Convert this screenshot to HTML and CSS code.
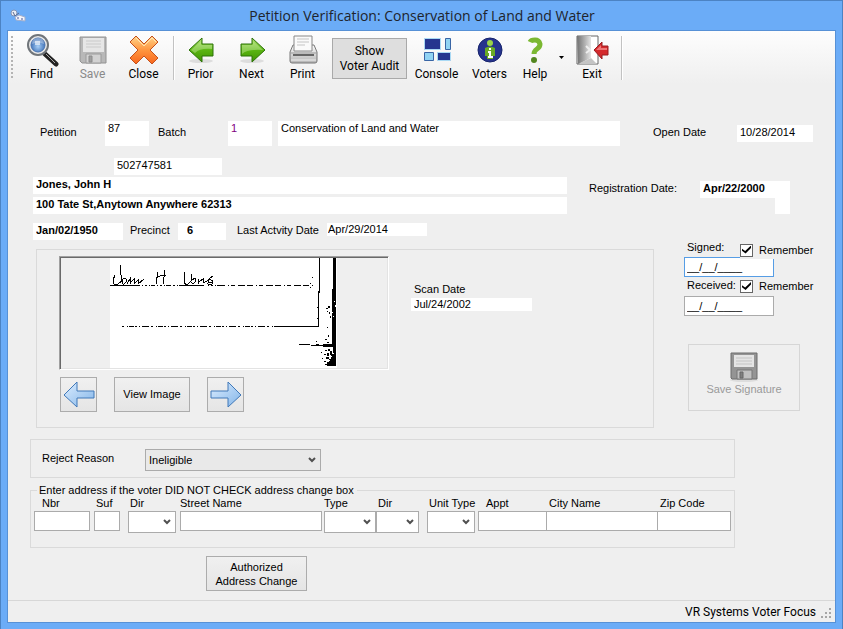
FILE: index.html
```html
<!DOCTYPE html>
<html lang="en">
  <head>
    <meta charset="UTF-8" />
    <meta name="viewport" content="width=device-width, initial-scale=1.0" />
    <title>Petition Verification: Conservation of Land and Water</title>
    <link rel="stylesheet" href="styles.css">
  </head>
  <body>
    <div class="window">
      <header class="titlebar">
        <svg class="app-icon" width="16" height="14" viewBox="0 0 16 14">
          <circle cx="4" cy="4" r="3" fill="#e8edf5" stroke="#8595b5" />
          <path d="M3 3l2 4 4-3" fill="none" stroke="#5d6b92" />
          <path d="M5 8l4-2 6 2v4l-9-1z" fill="#f2f4fa" stroke="#a4afcb" />
          <path d="M7 9h2M11 10h2" stroke="#4a5598" stroke-width="1" />
        </svg>
        <h1>Petition Verification: Conservation of Land and Water</h1>
      </header>

      <main class="client">
        <nav class="toolbar">
          <span class="grip"></span>
          <button type="button" class="tool">
            <svg width="34" height="34" viewBox="0 0 34 34">
              <defs>
                <radialGradient id="lens" cx="50%" cy="60%" r="60%">
                  <stop offset="0" stop-color="#a9d0f7" />
                  <stop offset="1" stop-color="#2d62ae" />
                </radialGradient>
              </defs>
              <path d="M20 21l11 10" stroke="#222" stroke-width="5" stroke-linecap="round" />
              <path d="M21 21l9 9" stroke="#aaa" stroke-width="1" />
              <circle cx="13" cy="12" r="10" fill="#e8e8e8" stroke="#70757a" stroke-width="2" />
              <circle cx="13" cy="12" r="7" fill="url(#lens)" stroke="#4a74b0" />
              <path d="M7 11q0-6 6-6t6 6q-6-3-12 0z" fill="#fff" opacity=".35" />
              <path d="M10 8h5v4h-5z" fill="#fff" opacity=".6" />
            </svg>
            Find
          </button>
          <button type="button" class="tool" disabled>
            <svg width="34" height="34" viewBox="0 0 34 34">
              <path d="M4 4h26v26H6l-2-2z" fill="#b8b8b8" stroke="#929292" />
              <path d="M7 5h21v14H7z" fill="#e6e6e6" />
              <path d="M10 8h15M10 11h15M10 14h15" stroke="#cacaca" />
              <path d="M10 21h15v9H10z" fill="#d2d2d2" stroke="#9a9a9a" />
              <path d="M13 23h3v6h-3z" fill="#a0a0a0" stroke="#8c8c8c" />
            </svg>
            Save
          </button>
          <button type="button" class="tool">
            <svg width="34" height="34" viewBox="0 0 34 34">
              <defs>
                <linearGradient id="orange" x2="0" y2="1">
                  <stop offset="0" stop-color="#ffd58c" />
                  <stop offset=".5" stop-color="#ff9640" />
                  <stop offset="1" stop-color="#f8661d" />
                </linearGradient>
              </defs>
              <path d="M9 3l8 8 8-8 6 6-8 8 8 8-6 6-8-8-8 8-6-6 8-8-8-8z" fill="url(#orange)" stroke="#c4501c" stroke-linejoin="round" />
              <path d="M9 5l8 8 8-8 4 4" fill="none" stroke="#fff1c4" opacity=".8" />
            </svg>
            Close
          </button>
          <span class="separator"></span>
          <button type="button" class="tool">
            <svg width="34" height="34" viewBox="0 0 34 34">
              <defs>
                <linearGradient id="green" x2="0" y2="1">
                  <stop offset="0" stop-color="#b0e070" />
                  <stop offset=".5" stop-color="#5bb512" />
                  <stop offset="1" stop-color="#409400" />
                </linearGradient>
              </defs>
              <ellipse cx="17" cy="28" rx="12" ry="2" fill="#ddd" />
              <path d="M5 17L18 5v6h11v12H18v6z" fill="url(#green)" stroke="#2c7308" />
              <path d="M7 17L17 8v4h11v4q-12-1-17 4z" fill="#d8f3b4" opacity=".4" />
            </svg>
            Prior
          </button>
          <button type="button" class="tool">
            <svg width="34" height="34" viewBox="0 0 34 34">
              <ellipse cx="17" cy="28" rx="12" ry="2" fill="#ddd" />
              <path d="M30 17L17 5v6H6v12h11v6z" fill="url(#green)" stroke="#2c7308" />
              <path d="M28 17L18 8v4H7v9q5-5 21-4z" fill="#d8f3b4" opacity=".4" />
            </svg>
            Next
          </button>
          <button type="button" class="tool">
            <svg width="34" height="34" viewBox="0 0 34 34">
              <defs>
                <linearGradient id="silver" x2="0" y2="1">
                  <stop offset="0" stop-color="#fcfcfc" />
                  <stop offset="1" stop-color="#b4b4b4" />
                </linearGradient>
              </defs>
              <path d="M7 12L4 19v9q0 2 2 2h23q2 0 2-2v-9l-3-7z" fill="url(#silver)" stroke="#777" />
              <path d="M8 3h18v15H8z" fill="#fafafa" stroke="#888" />
              <path d="M11 6h12M11 9h12M11 12h8" stroke="#c4c4c4" />
              <path d="M4 20h27" stroke="#999" />
              <path d="M7 22h21" stroke="#666" stroke-width="2" />
              <path d="M5 27h25" stroke="#d8d8d8" stroke-width="2" />
            </svg>
            Print
          </button>
          <button type="button" class="audit">Show<br />Voter Audit</button>
          <button type="button" class="tool wide">
            <svg width="34" height="34" viewBox="0 0 34 34">
              <path d="M4.500 5.500h16v11h-16zM17.500 19.500h13v8h-13z" fill="#25368f" stroke="#a9d9f4" />
              <path d="M25.500 5.500h5v11h-5zM4.500 19.500h9v8h-9z" fill="#91d3f3" stroke="#3965a5" />
            </svg>
            Console
          </button>
          <button type="button" class="tool">
            <svg width="34" height="34" viewBox="0 0 34 34">
              <circle cx="17" cy="17" r="12" fill="#26338d" stroke="#17246c" />
              <circle cx="17" cy="10" r="3" fill="#9bd447" />
              <path d="M12 15q5-3 10 0v8h-2v3h-6v-3h-2z" fill="#69ab26" />
              <path d="M17 15v2M15 19h2v5M15 24h5" stroke="#fff" stroke-width="2" fill="none" />
            </svg>
            Voters
          </button>
          <button type="button" class="tool narrow">
            <svg width="34" height="34" viewBox="0 0 34 34">
              <path d="M12 9q1-2 5-2t5 4q0 3-3 5t-3 5" fill="none" stroke="#7bb832" stroke-width="5" />
              <circle cx="16" cy="27" r="3" fill="#528620" />
            </svg>
            Help
          </button>
          <button type="button" class="drop" aria-label="More help"></button>
          <button type="button" class="tool narrow">
            <svg width="34" height="34" viewBox="0 0 34 34">
              <defs>
                <linearGradient id="door">
                  <stop offset="0" stop-color="#707070" />
                  <stop offset="1" stop-color="#e4e4e4" />
                </linearGradient>
              </defs>
              <path d="M2 3h21v28H2z" fill="#fff" stroke="#666" />
              <path d="M3 31l13-6 6 6z" fill="#c4c4c4" />
              <path d="M2 3h14v22L3 31z" fill="url(#door)" />
              <path d="M11 13l4 4-4 3" fill="none" stroke="#eee" stroke-width="2" />
              <path d="M19 17l8-8v4h6v9h-6v4z" fill="#d42a2d" stroke="#981c20" />
              <path d="M21 17l5-5v3h6v2z" fill="#ee7777" />
            </svg>
            Exit
          </button>
          <span class="separator"></span>
        </nav>

        <form class="form">
          <div class="row petition">
            <label class="petition-label" for="petition">Petition</label>
            <input class="plain tall small" id="petition" value="87" readonly />
            <label class="batch-label" for="batch">Batch</label>
            <input class="plain tall small batch" id="batch" value="1" readonly />
            <input class="plain tall grow" aria-label="Petition name" value="Conservation of Land and Water" readonly />
            <label class="open-label" for="openDate">Open Date</label>
            <input class="plain open-date" id="openDate" value="10/28/2014" readonly />
          </div>

          <div class="row">
            <input class="plain voter-id" aria-label="Voter ID" value="502747581" readonly />
          </div>

          <div class="row voter">
            <div class="voter-lines">
              <input class="plain strong" aria-label="Voter name" value="Jones, John H" readonly />
              <input class="plain strong" aria-label="Voter address" value="100 Tate St,Anytown Anywhere 62313" readonly />
            </div>
            <label class="reg-label" for="regDate">Registration Date:</label>
            <div class="reg">
              <input class="plain strong" id="regDate" value="Apr/22/2000" readonly />
              <span class="reg-edge"></span>
            </div>
          </div>

          <div class="middle">
            <div class="left">
              <div class="row details">
                <input class="plain strong birth" aria-label="Birth date" value="Jan/02/1950" readonly />
                <label class="precinct-label" for="precinct">Precinct</label>
                <input class="plain strong precinct" id="precinct" value="6" readonly />
                <label class="activity-label" for="activity">Last Actvity Date</label>
                <input class="plain short activity" id="activity" value="Apr/29/2014" readonly />
              </div>

              <section class="panel signature-panel">
                <div>
                  <div class="viewer">
                    <svg width="227" height="110" viewBox="0 0 227 110" shape-rendering="crispEdges" role="img" aria-label="Scanned signature">
                      <path fill="#fff" d="M0 0h227v110H0z" />
                      <g fill="none" stroke="#000">
                        <path d="M5 17l-2 5 1 4 3 1 4-4 3-3M10 7v4l1 6 1 5 1 4M10 25l4-5 2 1v3l-3 3M17 26l3-5 0 5M20 25l4-4 0 5 4-4 0 4 6-5M48 14l-1 6-1 6M55 12l-1 7-1 7M46 20l4-2 6-1M75 14l-1 6v5l3 2 4-4 1-7M82 22l3-2 1 3-3 3-2-2M88 26l1-5M89 24l4-3 0 4 4-2 2-2-1 4 4-1M103 18l-4 3 4 2-1 3h-4" />
                        <path d="M0 27.500h30M72 27.500h22" />
                        <path d="M32 27.500h28M60 27.500h14M98 27.500h14" stroke-dasharray="1 2 2 2 1 1 4 2" />
                        <path d="M109 27.500h96" stroke-dasharray="6 3 1 2 4 3 7 2" />
                        <path d="M12 68.500h160" stroke-dasharray="2 3 1 1 5 1 2 2 1 2 7 2" />
                        <path d="M166 68.500h43M209.500 0v35M208.500 33v36" />
                        <path d="M189 86.500h11M201 87.500h25M206 86.500h3M213 86.500h10M213 88.500h11" />
                      </g>
                      <path d="M223 0h3v108h-9v-4h2v-3h2v-5h2v-8h-1V31h1z" />
                      <path d="M202 19h1v1h-1zM200 25h1v1h-1zM200 29h1v1h-1zM207 49h1v1h-1zM207 60h1v1h-1zM216 50h2v1h-2zM218 48h2v2h-2zM217 53h1v1h-1zM219 54h1v2h-1zM220 58h1v2h-1zM217 69h1v1h-1zM218 77h1v2h-1zM215 81h2v1h-2zM206 83h1v1h-1zM217 84h2v1h-2zM215 92h2v1h-2zM218 91h2v2h-2zM211 94h1v1h-1zM214 96h2v1h-2zM217 95h2v3h-2zM220 93h2v4h-2zM212 100h1v1h-1zM216 99h3v2h-3zM214 103h2v1h-2zM215 106h2v1h-2z" />
                      <path fill="#fff" d="M224 43h1v1h-1zM225 47h1v2h-1zM222 54h1v1h-1zM223 58h1v1h-1zM221 98h1v1h-1zM223 95h1v1h-1zM219 102h1v1h-1z" />
                    </svg>
                  </div>
                  <div class="viewer-actions">
                    <button type="button" class="arrow" aria-label="Previous image">
                      <svg width="32" height="30" viewBox="0 0 32 30">
                        <defs>
                          <linearGradient id="blue" x2="1" y2="1">
                            <stop offset="0" stop-color="#dcedff" />
                            <stop offset="1" stop-color="#83b5e8" />
                          </linearGradient>
                        </defs>
                        <path d="M1 15L14 2v9h17v7H14v9z" fill="url(#blue)" stroke="#4078b8" />
                      </svg>
                    </button>
                    <button type="button" class="view">View Image</button>
                    <button type="button" class="arrow" aria-label="Next image">
                      <svg width="32" height="30" viewBox="0 0 32 30">
                        <path d="M31 15L18 2v9H1v7h17v9z" fill="url(#blue)" stroke="#4078b8" />
                      </svg>
                    </button>
                  </div>
                </div>
                <div class="scan">
                  <label for="scanDate">Scan Date</label>
                  <input class="plain short" id="scanDate" value="Jul/24/2002" readonly />
                </div>
              </section>
            </div>

            <div class="right">
              <div class="date-head signed-head">
                <label for="signed">Signed:</label>
                <label class="remember"><input type="checkbox" checked /> Remember</label>
              </div>
              <input class="date focused" id="signed" value="__/__/____" />
              <div class="date-head">
                <label for="received">Received:</label>
                <label class="remember"><input type="checkbox" checked /> Remember</label>
              </div>
              <input class="date" id="received" value="__/__/____" />
              <button type="button" class="save-signature" disabled>
                <svg width="30" height="30" viewBox="0 0 30 30">
                  <ellipse cx="15" cy="28" rx="14" ry="2" fill="#ddd" />
                  <path d="M2 1h26v26H3l-1-1z" fill="#949494" stroke="#6c6c6c" />
                  <path d="M5 3h20v12H5z" fill="#e4e4e4" />
                  <path d="M7 6h16M7 9h16M7 12h16" stroke="#c4c4c4" />
                  <path d="M8 18h15v9H8z" fill="#c0c0c0" stroke="#777" />
                  <path d="M11 20h3v6h-3z" fill="#808080" stroke="#666" />
                </svg>
                Save Signature
              </button>
            </div>
          </div>

          <section class="panel reject">
            <label for="reason">Reject Reason</label>
            <select id="reason">
              <option>Ineligible</option>
            </select>
          </section>

          <fieldset class="panel address">
            <legend>Enter address if the voter DID NOT CHECK address change box</legend>
            <div class="address-grid">
              <label class="in" for="nbr">Nbr</label>
              <label for="suf">Suf</label>
              <label for="dir">Dir</label>
              <label class="out" for="street">Street Name</label>
              <label class="out" for="type">Type</label>
              <label for="postDir">Dir</label>
              <label for="unitType">Unit Type</label>
              <label class="in" for="appt">Appt</label>
              <label for="city">City Name</label>
              <label for="zip">Zip Code</label>
              <input id="nbr" />
              <input class="suf" id="suf" />
              <select class="dir" id="dir"><option></option></select>
              <input class="street" id="street" />
              <select id="type"><option></option></select>
              <select class="post" id="postDir"><option></option></select>
              <select class="unit" id="unitType"><option></option></select>
              <input class="appt" id="appt" />
              <input class="joined" id="city" />
              <input class="joined" id="zip" />
            </div>
          </fieldset>

          <button type="button" class="authorized">Authorized<br />Address Change</button>
        </form>

        <footer class="statusbar">
          <span>VR Systems Voter Focus</span>
          <svg width="11" height="11" viewBox="0 0 11 11" fill="#a6a6a6">
            <path d="M8 0h2v2H8zM4 4h2v2H4zM8 4h2v2H8zM0 8h2v2H0zM4 8h2v2H4zM8 8h2v2H8z" />
          </svg>
        </footer>
      </main>
    </div>
  </body>
</html>
```
FILE: styles.css
```css
* {
  box-sizing: border-box;
}
body {
  margin: 0;
  font-family: "Liberation Sans", Arial, sans-serif;
  font-size: 11px;
  line-height: 13px;
  color: #000;
}
button,
input,
select {
  font: inherit;
  color: inherit;
  margin: 0;
  border-radius: 0;
}

/* window frame */
.window {
  display: flex;
  flex-direction: column;
  min-height: 100vh;
  padding: 0 6px 6px;
  background: #6bacf7;
  border: 1px solid #4c83c3;
  border-bottom: 0;
}
.titlebar {
  display: flex;
  align-items: center;
  height: 29px;
}
.titlebar h1 {
  flex: 1;
  margin: 0 18px 0 0;
  font: 14px/20px "Open Sans", sans-serif;
  color: #20242c;
  text-align: center;
}
.app-icon {
  margin-left: 3px;
}
.client {
  flex: 1;
  display: flex;
  flex-direction: column;
  background: #efefef;
  border: 1px solid #5791d6;
}

/* toolbar */
.toolbar {
  display: flex;
  align-items: flex-start;
  height: 53px;
  padding: 2px 0 0 3px;
  background: linear-gradient(#fdfdfd, #efefef);
}
.grip {
  width: 2px;
  height: 43px;
  margin: 3px 3px 0 0;
  background: repeating-linear-gradient(#b4b4b4 0 2px, transparent 2px 4px);
}
.tool {
  display: flex;
  flex-direction: column;
  align-items: center;
  width: 51px;
  padding: 0;
  border: 0;
  background: none;
  font: 12px/14px Roboto, sans-serif;
}
.tool:disabled {
  color: #8a8a8a;
}
.tool.wide {
  width: 55px;
}
.tool.narrow {
  width: 40px;
}
.separator {
  width: 2px;
  height: 44px;
  margin: 3px 0 0 4px;
  background: #c2c2c2;
  border-right: 1px solid #fff;
}
.separator:last-child {
  margin-left: 9px;
}
.audit {
  width: 75px;
  height: 41px;
  margin: 5px 2px 0 4px;
  padding: 0;
  border: 1px solid #a9a9a9;
  background: #dedede;
  font: 12px/15px Roboto, sans-serif;
}
.drop {
  width: 5px;
  height: 3px;
  margin: 23px 8px 0 4px;
  padding: 0;
  border: 0;
  background: #000;
  clip-path: polygon(0 0, 100% 0, 50% 100%);
}

/* form */
.form {
  flex: 1;
  padding: 37px 22px 9px;
}
.row {
  display: flex;
}
.plain {
  min-width: 0;
  height: 17px;
  padding: 0 3px 3px;
  border: 0;
  background: #fff;
}
.strong {
  font-weight: bold;
}
.short {
  height: 13px;
  padding-bottom: 0;
}
.tall {
  height: 25px;
  padding-bottom: 12px;
}
.grow {
  flex: 1;
}
.small {
  width: 44px;
}
.petition {
  align-items: center;
  padding-left: 10px;
  margin-bottom: 12px;
}
.petition label {
  padding-bottom: 2px;
}
.petition-label {
  width: 65px;
}
.batch-label {
  width: 70px;
  margin-left: 9px;
}
.batch {
  margin-right: 6px;
  color: #800080;
}
.open-label {
  width: 84px;
  margin-left: 33px;
}
.open-date {
  width: 76px;
}
.voter-id {
  width: 108px;
  margin: 0 0 2px 84px;
}
.voter {
  padding-left: 3px;
  margin-bottom: 9px;
}
.voter-lines {
  flex: 1;
  display: flex;
  flex-direction: column;
  gap: 3px;
}
.reg-label {
  width: 111px;
  margin: 5px 0 0 22px;
}
.reg {
  display: flex;
  flex-direction: column;
  width: 90px;
  margin: 4px 23px 0 0;
}
.reg-edge {
  align-self: flex-end;
  flex: 1;
  width: 15px;
  background: #fff;
}
.middle {
  display: flex;
  gap: 30px;
  padding-left: 3px;
}
.left {
  flex: 1;
}
.details label {
  margin-top: 1px;
}
.birth {
  width: 90px;
}
.precinct-label {
  width: 48px;
  margin-left: 7px;
}
.precinct {
  width: 48px;
  padding-left: 9px;
}
.activity-label {
  width: 90px;
  margin-left: 11px;
}
.activity {
  width: 100px;
  padding-left: 1px;
}

.panel {
  margin: 0;
  border: 1px solid #dadada;
}
.signature-panel {
  display: flex;
  gap: 22px;
  height: 179px;
  margin: 9px 0 0 3px;
  padding: 6px 22px;
}
.viewer {
  width: 330px;
  height: 114px;
  padding: 1px 1px 1px 50px;
  border: 1px solid #fff;
  border-top-color: #a0a0a0;
  border-left-color: #a0a0a0;
  box-shadow: inset 1px 1px #696969, inset -1px -1px #e3e3e3;
}
.viewer svg {
  display: block;
}
.viewer-actions {
  display: flex;
  gap: 17px;
  margin: 7px 0 0 1px;
}
.arrow,
.view,
.authorized {
  height: 35px;
  padding: 0;
  border: 1px solid #acacac;
  background: linear-gradient(#f0f0f0, #e5e5e5);
}
.arrow {
  display: flex;
  align-items: center;
  justify-content: center;
  width: 37px;
}
.view {
  width: 76px;
}
.scan {
  display: flex;
  flex-direction: column;
  gap: 2px;
  width: 121px;
  padding-top: 27px;
}
.scan label {
  padding-left: 3px;
}

/* signed and received dates */
.right {
  display: flex;
  flex-direction: column;
  align-items: flex-start;
  width: 129px;
  padding-top: 18px;
}
.date-head {
  display: flex;
  justify-content: space-between;
  width: 100%;
  height: 19px;
  padding-left: 3px;
}
.date-head label:first-child {
  padding-top: 2px;
}
.signed-head {
  position: relative;
  height: 18px;
  margin-bottom: -2px;
}
.signed-head label:first-child {
  padding-top: 0;
}
.remember {
  display: flex;
  align-items: center;
  gap: 6px;
  width: 73px;
  background: #efefef;
}
.remember input {
  appearance: none;
  width: 13px;
  height: 13px;
  border: 1px solid #666;
  background: #fff;
}
.remember input:checked::after {
  content: "";
  display: block;
  width: 9px;
  height: 8px;
  margin: 1px;
  background: #000;
  clip-path: polygon(0 40%, 35% 70%, 100% 0, 100% 30%, 40% 100%, 0 65%);
}
.date {
  width: 90px;
  height: 20px;
  padding: 0 2px;
  border: 1px solid #ababab;
  background: #fff;
}
.focused {
  border-color: #569de5;
}
.save-signature {
  display: flex;
  flex-direction: column;
  align-items: center;
  gap: 1px;
  width: 112px;
  height: 67px;
  margin: 28px 0 0 4px;
  padding: 7px 0 0;
  border: 1px solid #d6d6d6;
  background: none;
  color: #9a9a9a;
}

/* reject reason and address change */
select,
.address input {
  appearance: none;
  width: 100%;
  min-width: 0;
  height: 22px;
  padding: 0 3px;
  border: 1px solid #ababab;
  background: #fff;
}
select {
  background: #fff url("data:image/svg+xml,%3Csvg xmlns='http://www.w3.org/2000/svg' width='8' height='6'%3E%3Cpath d='M1 1l3 3 3-3' fill='none' stroke='%23505050' stroke-width='2'/%3E%3C/svg%3E") no-repeat right 4px center;
}
.reject {
  display: flex;
  height: 39px;
  margin: 11px 78px 6px 0;
  padding: 9px 11px;
}
.reject label {
  width: 103px;
  padding-top: 3px;
}
.reject select {
  width: 176px;
  background-color: #e9e9e9;
}
.address {
  height: 64px;
  margin-right: 78px;
  padding: 0 3px;
}
.address legend {
  padding: 0 3px 0 2px;
  margin-left: 3px;
}
.address-grid {
  display: grid;
  grid-template-columns: 60px 34px 52px 1fr 52px 51px 51px 69px 111px 73px;
  grid-template-rows: 14px 22px;
}
.address-grid label {
  padding-left: 2px;
  white-space: nowrap;
}
.address-grid .in {
  padding-left: 8px;
}
.address-grid .out {
  padding-left: 0;
}
.address input {
  height: 20px;
}
.address #nbr {
  width: 56px;
}
.address .suf {
  width: 26px;
}
.address .dir,
.address .unit {
  width: 48px;
}
.address .street {
  width: auto;
  margin-right: 2px;
}
.address .post {
  width: 43px;
}
.address .joined {
  border-left: 0;
}
.authorized {
  display: block;
  width: 101px;
  margin: 8px 0 0 176px;
  line-height: 14px;
}

.statusbar {
  display: flex;
  justify-content: flex-end;
  align-items: center;
  gap: 5px;
  height: 22px;
  padding-right: 3px;
  border-top: 1px solid #d7d7d7;
  font: 12px/16px Roboto, sans-serif;
}
.statusbar svg {
  align-self: flex-end;
  margin-bottom: 3px;
}
```
